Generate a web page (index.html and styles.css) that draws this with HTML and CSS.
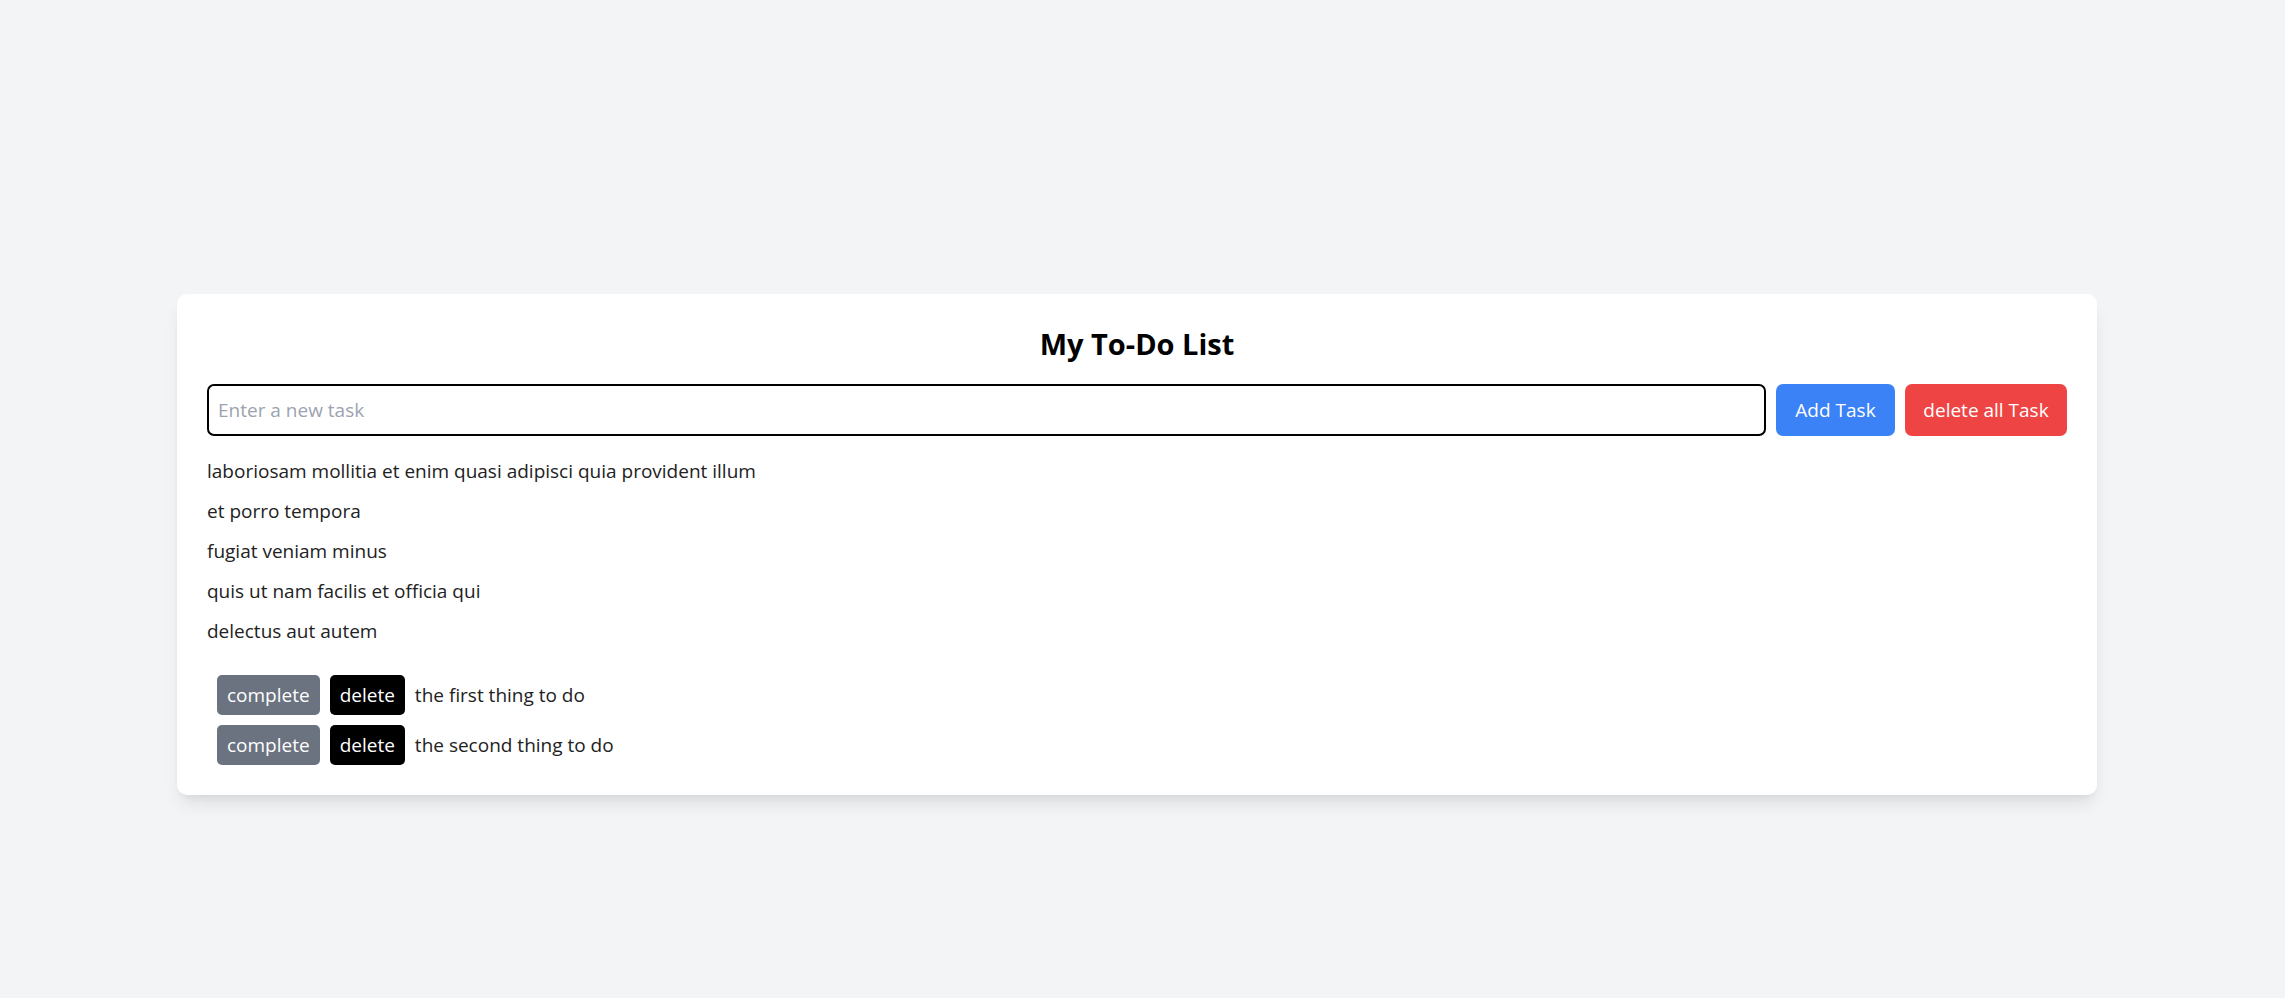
FILE: index.html
```html
<!DOCTYPE html>
<html lang="en">
<head>
<meta charset="utf-8">
<title>My To-Do List</title>
<link rel="stylesheet" href="styles.css">
</head>
<body>
<main class="page">
  <section class="card">
    <h1 class="title">My To-Do List</h1>
    <div class="entry">
      <input class="task-input" type="text" placeholder="Enter a new task">
      <button class="btn btn-add">Add Task</button>
      <button class="btn btn-clear">delete all Task</button>
    </div>
    <ul class="fetched">
      <li>laboriosam mollitia et enim quasi adipisci quia provident illum</li>
      <li>et porro tempora</li>
      <li>fugiat veniam minus</li>
      <li>quis ut nam facilis et officia qui</li>
      <li>delectus aut autem</li>
    </ul>
    <ul class="tasks">
      <li class="task">
        <button class="sbtn sbtn-complete">complete</button>
        <button class="sbtn sbtn-delete">delete</button>
        <span class="task-text">the first thing to do</span>
      </li>
      <li class="task">
        <button class="sbtn sbtn-complete">complete</button>
        <button class="sbtn sbtn-delete">delete</button>
        <span class="task-text">the second thing to do</span>
      </li>
    </ul>
  </section>
</main>
</body>
</html>
```

FILE: styles.css
```css
* { box-sizing: border-box; }
html, body {
  margin: 0;
  padding: 0;
  background: #f3f4f6;
  font-family: "Open Sans", "Noto Sans", sans-serif;
  color: #222;
}
.page {
  min-height: 998px;
  padding-top: 294px;
  padding-left: 177px;
}
.card {
  width: 1920px;
  background: #ffffff;
  border-radius: 10px;
  box-shadow: 0 12px 18px -4px rgba(0,0,0,0.09), 0 5px 8px -5px rgba(0,0,0,0.08);
  padding: 30px;
}
.title {
  margin: 0 0 20px;
  text-align: center;
  font-size: 29px;
  line-height: 40px;
  font-weight: 700;
  color: #000;
}
.entry {
  display: flex;
  gap: 10px;
  height: 52px;
}
.task-input {
  flex: 1;
  border: 2px solid #000;
  border-radius: 7px;
  padding: 0 9px;
  font-family: inherit;
  font-size: 19px;
  color: #222;
  outline: none;
}
.task-input::placeholder { color: #9ca3af; }
.btn {
  border: none;
  border-radius: 7px;
  color: #fff;
  font-family: inherit;
  font-size: 19px;
  padding: 0;
  cursor: pointer;
}
.btn-add { background: #3b82f6; width: 119px; }
.btn-clear { background: #ef4444; width: 162px; }
.fetched {
  list-style: none;
  margin: 20px 0 0;
  padding: 0;
}
.fetched li {
  font-size: 19px;
  line-height: 30px;
  margin-bottom: 10px;
}
.tasks {
  list-style: none;
  margin: 29px 0 0;
  padding: 0 0 0 10px;
  display: flex;
  flex-direction: column;
  gap: 10px;
}
.task {
  display: flex;
  align-items: center;
  gap: 10px;
  height: 40px;
}
.sbtn {
  height: 40px;
  border: none;
  border-radius: 5px;
  color: #fff;
  font-family: inherit;
  font-size: 19px;
  padding: 0 10px;
}
.sbtn-complete { background: #6b7280; }
.sbtn-delete { background: #000; }
.task-text { font-size: 19px; }
```
